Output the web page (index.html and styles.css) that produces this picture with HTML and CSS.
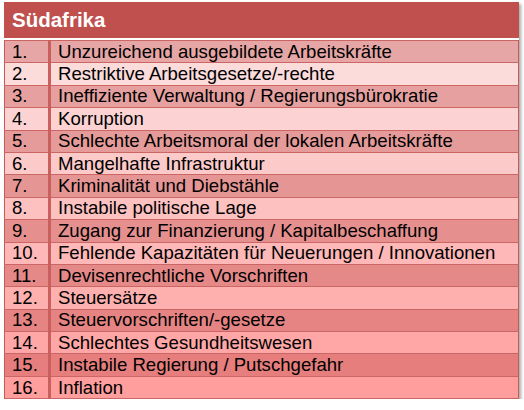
FILE: index.html
```html
<!DOCTYPE html>
<html lang="de">
<head>
<meta charset="utf-8">
<title>Südafrika</title>
<link rel="stylesheet" href="styles.css">
</head>
<body>
<div class="card">
  <div class="header">Südafrika</div>
  <table class="list">
    <tr><td class="num">1.</td><td class="txt">Unzureichend ausgebildete Arbeitskräfte</td></tr>
    <tr><td class="num">2.</td><td class="txt">Restriktive Arbeitsgesetze/-rechte</td></tr>
    <tr><td class="num">3.</td><td class="txt">Ineffiziente Verwaltung / Regierungsbürokratie</td></tr>
    <tr><td class="num">4.</td><td class="txt">Korruption</td></tr>
    <tr><td class="num">5.</td><td class="txt">Schlechte Arbeitsmoral der lokalen Arbeitskräfte</td></tr>
    <tr><td class="num">6.</td><td class="txt">Mangelhafte Infrastruktur</td></tr>
    <tr><td class="num">7.</td><td class="txt">Kriminalität und Diebstähle</td></tr>
    <tr><td class="num">8.</td><td class="txt">Instabile politische Lage</td></tr>
    <tr><td class="num">9.</td><td class="txt">Zugang zur Finanzierung / Kapitalbeschaffung</td></tr>
    <tr><td class="num">10.</td><td class="txt">Fehlende Kapazitäten für Neuerungen / Innovationen</td></tr>
    <tr><td class="num">11.</td><td class="txt">Devisenrechtliche Vorschriften</td></tr>
    <tr><td class="num">12.</td><td class="txt">Steuersätze</td></tr>
    <tr><td class="num">13.</td><td class="txt">Steuervorschriften/-gesetze</td></tr>
    <tr><td class="num">14.</td><td class="txt">Schlechtes Gesundheitswesen</td></tr>
    <tr><td class="num">15.</td><td class="txt">Instabile Regierung / Putschgefahr</td></tr>
    <tr><td class="num">16.</td><td class="txt">Inflation</td></tr>
  </table>
</div>
</body>
</html>
```
FILE: styles.css
```css
html, body {
  margin: 0;
  padding: 0;
  background: #ffffff;
}

body {
  padding: 2px 0 0 4px;
  font-family: "Liberation Sans", Arial, sans-serif;
}

.card {
  width: 515px;
  background: #ffffff;
  box-shadow: 2px 2px 3px rgba(0, 0, 0, 0.35);
}

.header {
  height: 36px;
  line-height: 36px;
  background: #c0504d;
  color: #ffffff;
  font-weight: bold;
  font-size: 20.5px;
  padding-left: 8px;
  border-bottom: 2px solid #ffffff;
}

.list {
  width: 100%;
  border-collapse: collapse;
  font-size: 18.6px;
  color: #000000;
}

.list td {
  height: 21.4px;
  padding: 0;
  border-top: 1px solid #cc6664;
  border-bottom: 1px solid #cc6664;
  line-height: 20px;
  white-space: nowrap;
}

.list .num {
  width: 36px;
  padding-left: 7px;
  border-left: 1px solid #c55a58;
  border-right: 3px solid #c9605e;
}

.list .txt {
  padding-left: 7px;
  border-right: 1px solid #c55a58;
}

.list tr:nth-child(1)  { background: #e5a6a5; }
.list tr:nth-child(2)  { background: #fbdcdb; }
.list tr:nth-child(3)  { background: #e5a09f; }
.list tr:nth-child(4)  { background: #fcd3d2; }
.list tr:nth-child(5)  { background: #e59b9a; }
.list tr:nth-child(6)  { background: #fccac9; }
.list tr:nth-child(7)  { background: #e59594; }
.list tr:nth-child(8)  { background: #fdc1c0; }
.list tr:nth-child(9)  { background: #e58f8e; }
.list tr:nth-child(10) { background: #fdb8b7; }
.list tr:nth-child(11) { background: #e58988; }
.list tr:nth-child(12) { background: #feb0af; }
.list tr:nth-child(13) { background: #e58483; }
.list tr:nth-child(14) { background: #fea7a6; }
.list tr:nth-child(15) { background: #e57e7d; }
.list tr:nth-child(16) { background: #ff9e9d; }
```
